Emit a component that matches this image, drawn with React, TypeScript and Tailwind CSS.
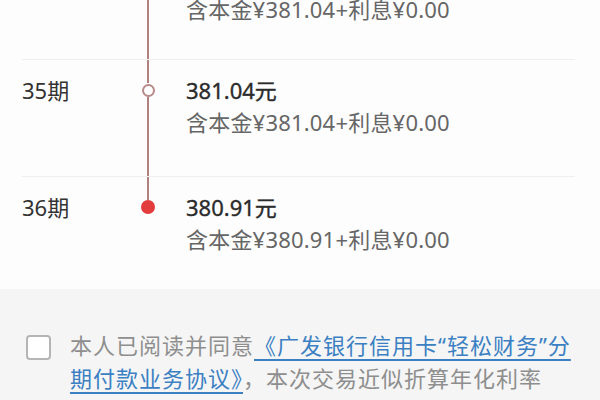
import React from 'react';

interface Installment {
  period: string;
  amount: string;
  principal: string;
  interest: string;
}

const rows: Installment[] = [
  { period: '34期', amount: '381.04元', principal: '381.04', interest: '0.00' },
  { period: '35期', amount: '381.04元', principal: '381.04', interest: '0.00' },
  { period: '36期', amount: '380.91元', principal: '380.91', interest: '0.00' },
];

const font = { fontFamily: '"Noto Sans", "Noto Sans CJK SC", sans-serif' };

const Row: React.FC<{ item: Installment; index: number; last: boolean }> = ({ item, index, last }) => {
  const first = index === 0;
  return (
    <div
      className={
        'flex ' +
        (first ? '-mt-[53px] h-[113px] border-b border-[#efefef] ' : '') +
        (!first && !last ? 'h-[117px] border-b border-[#efefef] ' : '') +
        (last ? 'h-[112px] ' : '')
      }
    >
      <div className="w-[104px] pt-[14px] text-[22px] leading-[32px] text-[#333333]">{item.period}</div>
      <div className="ml-[15px] flex w-[14px] flex-col items-center">
        <div className="h-[23px] w-[2px] bg-[#b38080]" />
        <div className="flex h-[14px] w-[14px] items-center justify-center">
          {last ? (
            <div className="h-[14px] w-[14px] rounded-full bg-[#e23c3c]" />
          ) : (
            <div className="h-[13px] w-[13px] rounded-full border-2 border-[#b88a8a] bg-white" />
          )}
        </div>
        {!last && <div className="w-[2px] flex-1 bg-[#b38080]" />}
      </div>
      <div className="ml-[31px] pt-[14px] leading-[32px]">
        <div className="text-[22px] text-[#2b2b2b] [-webkit-text-stroke:0.35px_#2b2b2b]">{item.amount}</div>
        <div className="text-[22px] tracking-[0.2px] text-[#666666]">
          含本金¥{item.principal}+利息¥{item.interest}
        </div>
      </div>
    </div>
  );
};

export default function App() {
  return (
    <div className="flex h-[400px] w-[600px] flex-col overflow-hidden bg-[#fdfdfd]" style={font}>
      <div className="px-[22px]">
        <div className="mr-[3px]">
          {rows.map((r, i) => (
            <Row key={r.period} item={r} index={i} last={i === rows.length - 1} />
          ))}
        </div>
      </div>
      <div className="flex flex-1 items-start bg-[#f5f5f5] px-[26px] pt-[40px]">
        <div className="mt-[6px] h-[25px] w-[25px] shrink-0 rounded-[4px] border-2 border-[#b5b5b5] bg-white" />
        <p className="ml-[19px] w-[512px] text-[22px] leading-[33px] tracking-[1px] text-[#8e8e8e]">
          本人已阅读并同意
          <span className="text-[#3b80c3] underline decoration-2 underline-offset-[5px]">
            《广发银行信用卡“轻松财务”分期付款业务协议》
          </span>
          ，本次交易近似折算年化利率
        </p>
      </div>
    </div>
  );
}
